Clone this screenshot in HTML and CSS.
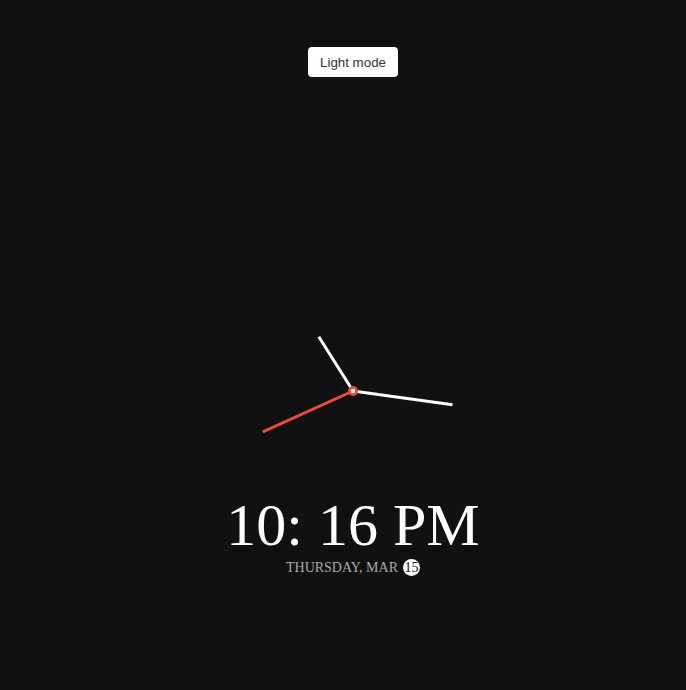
FILE: index.html
```html
<!DOCTYPE html>
<html>
<head>
<meta charset="utf-8">
<link rel="stylesheet" href="styles.css">
</head>
<body>
<div class="page">
  <button class="toggle">Light mode</button>
  <svg class="clock" width="220" height="200" viewBox="0 0 220 200">
    <line x1="110" y1="100" x2="75.8" y2="45.8" class="hand"/>
    <line x1="110" y1="100" x2="209.5" y2="113.8" class="hand"/>
    <line x1="110" y1="100" x2="19.8" y2="140.8" class="hand second"/>
    <circle cx="110" cy="100" r="5" fill="#e74c3c"/>
    <circle cx="110" cy="100" r="2.2" fill="#fff"/>
  </svg>
  <div class="time">10: 16 PM</div>
  <div class="date"><span class="day">THURSDAY, MAR</span><span class="num">15</span></div>
</div>
</body>
</html>
```
FILE: styles.css
```css
html, body {
  margin: 0;
  padding: 0;
  background: #111111;
}
.page {
  display: flex;
  flex-direction: column;
  align-items: center;
  padding-top: 47px;
  padding-left: 20px;
  min-height: 643px;
}
.toggle {
  width: 90px;
  height: 30px;
  background: #ffffff;
  color: #333333;
  border: none;
  border-radius: 4px;
  font-family: "Liberation Sans", Arial, sans-serif;
  font-size: 13.333px;
  padding: 0;
  cursor: pointer;
}
.clock {
  display: block;
  margin-top: 213.5px;
}
.hand {
  stroke: #ffffff;
  stroke-width: 3;
}
.hand.second {
  stroke: #e74c3c;
}
.time {
  margin-top: 4.7px;
  font-family: "Liberation Serif", "Times New Roman", serif;
  font-size: 60px;
  line-height: 60px;
  color: #ffffff;
}
.date {
  display: flex;
  align-items: center;
  gap: 5px;
  margin-top: 4.3px;
  font-family: "Liberation Serif", "Times New Roman", serif;
  font-size: 14px;
  line-height: 17px;
}
.day {
  color: #aaaaaa;
}
.num {
  width: 17px;
  height: 17px;
  border-radius: 50%;
  background: #ffffff;
  color: #111111;
  text-align: center;
}
```
